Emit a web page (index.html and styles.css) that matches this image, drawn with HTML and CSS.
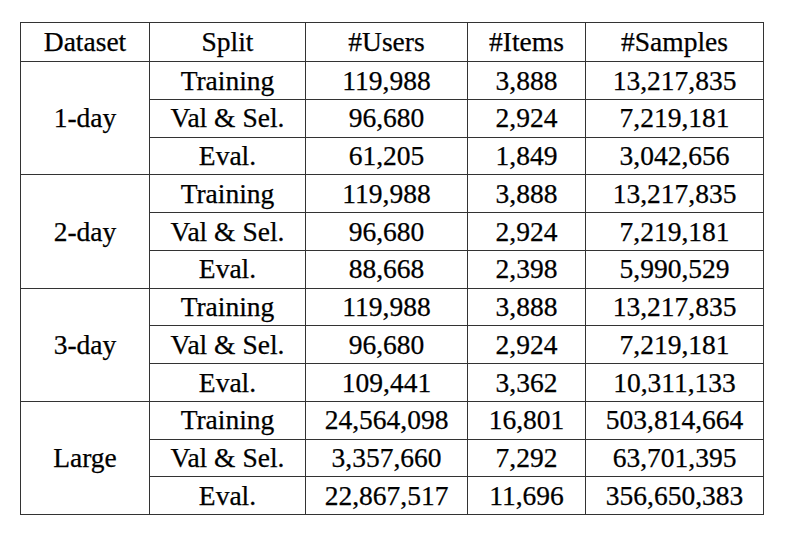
FILE: index.html
```html
<!DOCTYPE html>
<html>
<head>
<meta charset="utf-8">
<link rel="stylesheet" href="styles.css">
</head>
<body>
<div class="page">
<table class="data">
<colgroup>
<col class="c1"><col class="c2"><col class="c3"><col class="c4"><col class="c5">
</colgroup>
<thead>
<tr class="head"><th>Dataset</th><th>Split</th><th>#Users</th><th>#Items</th><th>#Samples</th></tr>
</thead>
<tbody>
<tr><td rowspan="3">1-day</td><td>Training</td><td>119,988</td><td>3,888</td><td>13,217,835</td></tr>
<tr><td>Val &amp; Sel.</td><td>96,680</td><td>2,924</td><td>7,219,181</td></tr>
<tr><td>Eval.</td><td>61,205</td><td>1,849</td><td>3,042,656</td></tr>
<tr><td rowspan="3">2-day</td><td>Training</td><td>119,988</td><td>3,888</td><td>13,217,835</td></tr>
<tr><td>Val &amp; Sel.</td><td>96,680</td><td>2,924</td><td>7,219,181</td></tr>
<tr><td>Eval.</td><td>88,668</td><td>2,398</td><td>5,990,529</td></tr>
<tr><td rowspan="3">3-day</td><td>Training</td><td>119,988</td><td>3,888</td><td>13,217,835</td></tr>
<tr><td>Val &amp; Sel.</td><td>96,680</td><td>2,924</td><td>7,219,181</td></tr>
<tr><td>Eval.</td><td>109,441</td><td>3,362</td><td>10,311,133</td></tr>
<tr><td rowspan="3">Large</td><td>Training</td><td>24,564,098</td><td>16,801</td><td>503,814,664</td></tr>
<tr><td>Val &amp; Sel.</td><td>3,357,660</td><td>7,292</td><td>63,701,395</td></tr>
<tr><td>Eval.</td><td>22,867,517</td><td>11,696</td><td>356,650,383</td></tr>
</tbody>
</table>
</div>
</body>
</html>
```
FILE: styles.css
```css
html, body {
  margin: 0;
  padding: 0;
  background: #fff;
}
.page {
  padding: 22px 0 0 20px;
}
.data {
  border-collapse: collapse;
  table-layout: fixed;
  width: 743px;
  font-family: "Liberation Serif", "Times New Roman", serif;
  font-size: 27.5px;
  color: #000;
  -webkit-text-stroke: 0.25px #000;
}
.c1 { width: 129px; }
.c2 { width: 156px; }
.c3 { width: 162px; }
.c4 { width: 118px; }
.c5 { width: 178px; }
.data th, .data td {
  border: 1.5px solid #333;
  padding: 0;
  text-align: center;
  vertical-align: middle;
  font-weight: normal;
  line-height: 1;
  white-space: nowrap;
}
.data tr { height: 37.75px; }
.data tr.head { height: 39px; }
```
